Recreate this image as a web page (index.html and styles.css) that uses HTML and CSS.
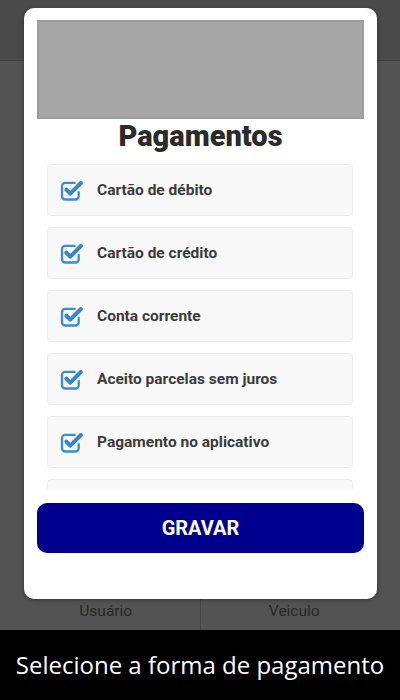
FILE: index.html
```html
<!DOCTYPE html>
<html lang="pt">
<head>
<meta charset="utf-8">
<link rel="stylesheet" href="styles.css">
</head>
<body>
<div class="screen">
  <div class="app">
    <div class="topbar"></div>
    <div class="content"></div>
    <div class="tabs">
      <div class="tab tab-left">Usuário</div>
      <div class="tab tab-right">Veiculo</div>
    </div>
  </div>
  <div class="caption">Selecione a forma de pagamento</div>

  <div class="modal">
    <div class="banner"></div>
    <h1 class="title">Pagamentos</h1>
    <div class="list">
      <div class="item">
        <svg class="check" viewBox="0 0 24 22" width="24" height="22"><path d="M15.5 3.8H5.2a3.2 3.2 0 0 0-3.2 3.2v10.3a3.2 3.2 0 0 0 3.2 3.2h10.3a3.2 3.2 0 0 0 3.2-3.2v-5" fill="none" stroke="#3d8bd0" stroke-width="2.3"/><path d="M6.3 10.6l4 4 10.6-10.6" fill="none" stroke="#3586cc" stroke-width="4" stroke-linecap="round" stroke-linejoin="round"/></svg>
        <span>Cartão de débito</span>
      </div>
      <div class="item">
        <svg class="check" viewBox="0 0 24 22" width="24" height="22"><path d="M15.5 3.8H5.2a3.2 3.2 0 0 0-3.2 3.2v10.3a3.2 3.2 0 0 0 3.2 3.2h10.3a3.2 3.2 0 0 0 3.2-3.2v-5" fill="none" stroke="#3d8bd0" stroke-width="2.3"/><path d="M6.3 10.6l4 4 10.6-10.6" fill="none" stroke="#3586cc" stroke-width="4" stroke-linecap="round" stroke-linejoin="round"/></svg>
        <span>Cartão de crédito</span>
      </div>
      <div class="item">
        <svg class="check" viewBox="0 0 24 22" width="24" height="22"><path d="M15.5 3.8H5.2a3.2 3.2 0 0 0-3.2 3.2v10.3a3.2 3.2 0 0 0 3.2 3.2h10.3a3.2 3.2 0 0 0 3.2-3.2v-5" fill="none" stroke="#3d8bd0" stroke-width="2.3"/><path d="M6.3 10.6l4 4 10.6-10.6" fill="none" stroke="#3586cc" stroke-width="4" stroke-linecap="round" stroke-linejoin="round"/></svg>
        <span>Conta corrente</span>
      </div>
      <div class="item">
        <svg class="check" viewBox="0 0 24 22" width="24" height="22"><path d="M15.5 3.8H5.2a3.2 3.2 0 0 0-3.2 3.2v10.3a3.2 3.2 0 0 0 3.2 3.2h10.3a3.2 3.2 0 0 0 3.2-3.2v-5" fill="none" stroke="#3d8bd0" stroke-width="2.3"/><path d="M6.3 10.6l4 4 10.6-10.6" fill="none" stroke="#3586cc" stroke-width="4" stroke-linecap="round" stroke-linejoin="round"/></svg>
        <span>Aceito parcelas sem juros</span>
      </div>
      <div class="item">
        <svg class="check" viewBox="0 0 24 22" width="24" height="22"><path d="M15.5 3.8H5.2a3.2 3.2 0 0 0-3.2 3.2v10.3a3.2 3.2 0 0 0 3.2 3.2h10.3a3.2 3.2 0 0 0 3.2-3.2v-5" fill="none" stroke="#3d8bd0" stroke-width="2.3"/><path d="M6.3 10.6l4 4 10.6-10.6" fill="none" stroke="#3586cc" stroke-width="4" stroke-linecap="round" stroke-linejoin="round"/></svg>
        <span>Pagamento no aplicativo</span>
      </div>
      <div class="item"></div>
    </div>
    <button class="save">GRAVAR</button>
  </div>
</div>
</body>
</html>
```

FILE: styles.css
```css
* { box-sizing: border-box; }
html, body { margin: 0; padding: 0; }
body {
  width: 400px;
  height: 700px;
  overflow: hidden;
  font-family: Roboto, "Liberation Sans", sans-serif;
}
.screen {
  position: relative;
  width: 400px;
  height: 700px;
  display: flex;
  flex-direction: column;
}
.app {
  flex: 1;
  display: flex;
  flex-direction: column;
  background: #535353;
}
.topbar {
  height: 61px;
  background: #4a4a4a;
  border-bottom: 1px solid #3f3f3f;
}
.content { flex: 1; }
.tabs {
  height: 40px;
  display: flex;
}
.tab {
  flex: 1;
  display: flex;
  align-items: flex-end;
  justify-content: center;
  padding-bottom: 10px;
  font-size: 15.5px;
  color: #282828;
}
.tab-left { padding-left: 12px; }
.tab-right { padding-right: 12px; border-left: 1px solid #444; }
.caption {
  height: 70px;
  background: #000;
  color: #fff;
  font-family: "Open Sans", sans-serif;
  font-size: 24px;
  display: flex;
  align-items: center;
  justify-content: center;
  padding-bottom: 2px;
}
.modal {
  position: absolute;
  top: 8px;
  left: 24px;
  width: 353px;
  height: 591px;
  background: #fff;
  border-radius: 10px;
  box-shadow: 0 1px 4px rgba(0,0,0,0.35);
  padding: 12px 13px 0 13px;
  display: flex;
  flex-direction: column;
}
.banner {
  height: 99px;
  background: #a6a6a6;
  border: 2px solid #9c9c9c;
}
.title {
  margin: 0 0 11px;
  height: 34px;
  line-height: 34px;
  text-align: center;
  font-size: 29px;
  font-weight: 900;
  color: #2b2b2b;
}
.list {
  height: 326px;
  overflow: hidden;
  margin: 0 11px 0 10px;
  display: flex;
  flex-direction: column;
  gap: 11px;
}
.item {
  flex: none;
  height: 52px;
  background: #f8f8f8;
  border: 1px solid #ececec;
  border-radius: 4px;
  display: flex;
  align-items: center;
  padding-left: 12px;
  gap: 13px;
  font-size: 15.5px;
  font-weight: 700;
  color: #3b3b3b;
}
.check { flex: none; }
.save {
  margin-top: 13px;
  height: 50px;
  border: none;
  border-radius: 10px;
  background: #00008f;
  color: #fff;
  font-family: Roboto, "Liberation Sans", sans-serif;
  font-size: 20px;
  font-weight: 700;
}
```
